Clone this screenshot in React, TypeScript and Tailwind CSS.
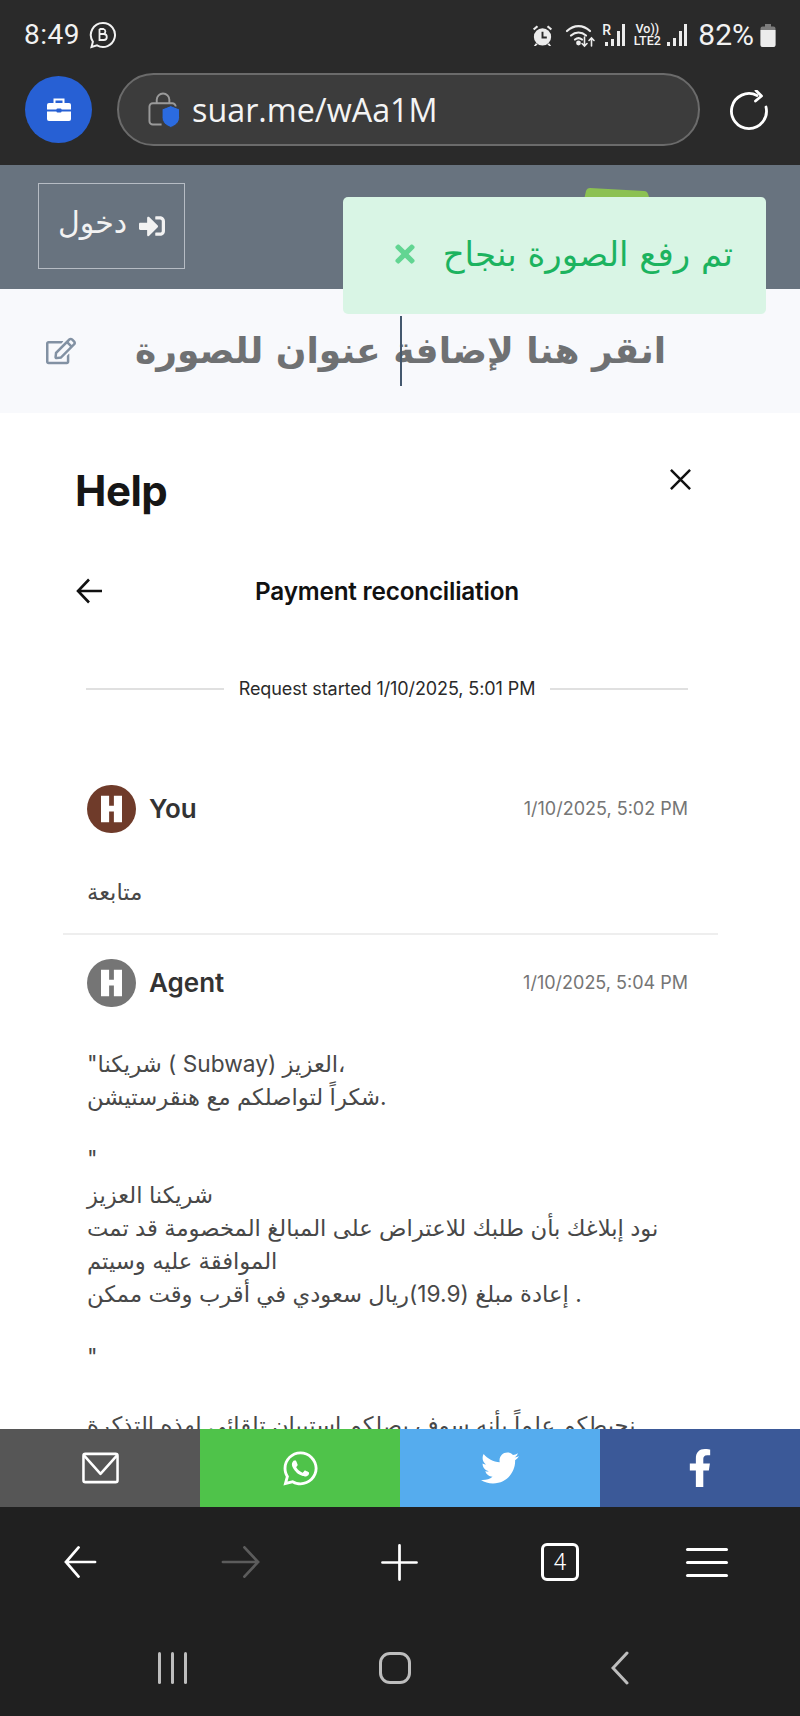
import { FaWhatsapp, FaTwitter, FaFacebookF, FaSignInAlt, FaRegEdit, FaTimes } from "react-icons/fa";

function Bars({ heights }: { heights: number[] }) {
  return (
    <div className="flex items-end gap-[2.67px] h-[22px]">
      {heights.map((h, i) => (
        <div key={i} className="w-[3px] bg-[#ececec]" style={{ height: h }} />
      ))}
    </div>
  );
}

function StatusBar() {
  return (
    <div className="h-[73px] flex items-center justify-between pl-[24px] pr-[24px] pb-[3px] text-[#f2f2f2]">
      <div className="flex items-center gap-[8px]">
        <span className="text-[28px] font-['Roboto',sans-serif] leading-none tracking-[0.5px]">8:49</span>
        <svg viewBox="0 0 28 28" className="w-[28px] h-[28px] ml-[1px]" fill="none" stroke="#f2f2f2" strokeWidth="2">
          <path d="M14 2a12 12 0 1 1-6 22.4L2.500 26l1.400-5.300A12 12 0 0 1 14 2z" />
          <path d="M10.500 8v11h4.300a3 3 0 0 0 0-6h-4.300m4 0a2.600 2.600 0 0 0 0-5h-4" strokeWidth="1.800" />
        </svg>
      </div>
      <div className="flex items-center">
        <svg viewBox="0 0 24 24" className="w-[23px] h-[23px]" fill="#ececec">
          <circle cx="12" cy="13.500" r="9" />
          <path d="M2 5l4-3.500 1.500 1.500-4 3.500zM22 5l-4-3.500-1.500 1.500 4 3.500zM5 20l-2 3h2l2-2zM19 20l2 3h-2l-2-2z" />
          <path d="M12 8v6h4.500" stroke="#2a2a2a" strokeWidth="2" fill="none" />
        </svg>
        <svg viewBox="0 0 30 26" className="w-[33px] h-[26px] ml-[10px]" fill="none" stroke="#ececec" strokeWidth="2.200" strokeLinecap="round">
          <path d="M1.500 9c7-6.500 16-6.500 23 0" />
          <path d="M5.500 13.500c4.500-4 10.500-4 15 0" />
          <path d="M9.500 17.500c2.500-2 4.500-2 7 0" />
          <circle cx="13" cy="21" r="1.300" fill="#ececec" />
          <path d="M19 15v9m-2.500-2.500 2.500 2.500 2.500-2.500M26 24v-8m-2.500 2.500L26 16l2.500 2.500" strokeWidth="1.600" />
        </svg>
        <div className="relative ml-[5px] w-[23px] h-[22px]">
          <span className="absolute left-0 top-[-1px] text-[14px] font-medium font-['Roboto',sans-serif] leading-none">R</span>
          <div className="absolute right-0 bottom-0">
            <Bars heights={[4, 7, 15, 22]} />
          </div>
        </div>
        <div className="ml-[8px] w-[28px] text-[12.500px] leading-[12px] font-medium font-['Roboto',sans-serif] text-center">
          <div>Vo))</div>
          <div>LTE2</div>
        </div>
        <div className="ml-[6px]">
          <Bars heights={[4, 8, 15, 22]} />
        </div>
        <span className="ml-[11px] text-[30px] font-['Roboto',sans-serif] leading-none">82%</span>
        <svg viewBox="0 0 16 23" className="w-[16px] h-[23px] ml-[6px]">
          <path d="M5 0h6v2.500h2.500a2 2 0 0 1 2 2V21a2 2 0 0 1-2 2h-11a2 2 0 0 1-2-2V4.500a2 2 0 0 1 2-2H5z" fill="#7c7c7c" />
          <path d="M.5 6h15v15a2 2 0 0 1-2 2h-11a2 2 0 0 1-2-2z" fill="#ececec" />
        </svg>
      </div>
    </div>
  );
}

function UrlRow() {
  return (
    <div className="h-[73px] flex items-center pl-[25px]">
      <div className="w-[67px] h-[67px] rounded-full bg-[#2760d4] flex items-center justify-center">
        <svg viewBox="0 0 26 26" className="w-[26px] h-[26px]" fill="none">
          <path d="M8.500 6V2.500h9V6" stroke="#fff" strokeWidth="2" />
          <path d="M1 8a2 2 0 0 1 2-2h20a2 2 0 0 1 2 2v4.500H1z" fill="#fff" />
          <path d="M1 14.500h24V22a2 2 0 0 1-2 2H3a2 2 0 0 1-2-2z" fill="#fff" />
          <rect x="10.500" y="11.500" width="5" height="4" rx="1" fill="#2760d4" />
        </svg>
      </div>
      <div className="ml-[25px] w-[583px] h-[73px] rounded-full bg-[#3c3c3c] border-2 border-[#6b6b6b] flex items-center pl-[29px]">
        <svg viewBox="0 0 34 36" className="w-[33px] h-[36px]" fill="none">
          <path d="M9 11V7.500a6.500 6.500 0 0 1 13 0V11" stroke="#9a9a9a" strokeWidth="2" />
          <path d="M14 33H5a3.500 3.500 0 0 1-3.500-3.500v-15A3.500 3.500 0 0 1 5 11h20a3.500 3.500 0 0 1 3.500 3.500" stroke="#9a9a9a" strokeWidth="2" />
          <path d="M23.500 13.500l9 3.500v8.500c0 5.500-4 8.500-9 10.500-5-2-9-5-9-10.500V17z" fill="#2b6be0" stroke="#3c3c3c" strokeWidth="1" />
        </svg>
        <span className="ml-[11px] text-[32.300px] leading-none text-[#f4f4f4] font-['Open_Sans',sans-serif]">suar.me/wAa1M</span>
      </div>
      <svg viewBox="0 0 40 40" className="ml-[29px] w-[40px] h-[40px]" fill="none" stroke="#fff" strokeWidth="2.800" strokeLinecap="round" strokeLinejoin="round">
        <path d="M28 5.500A17.500 17.500 0 1 0 37 17" />
        <path d="M27 0.500l5.500 5.500-6 5" />
      </svg>
    </div>
  );
}

function Toast() {
  return (
    <div className="absolute left-[343px] top-[197px] w-[423px] h-[117px] rounded-[5px] bg-[#d9f5e5] flex items-center justify-end gap-[24px] pr-[33px] pb-[3px] text-[#1cb35f] font-['DejaVu_Sans',sans-serif]">
      <FaTimes className="text-[28px] text-[#62d592]" />
      <span dir="rtl" className="text-[34px] leading-none">تم رفع الصورة بنجاح</span>
    </div>
  );
}

function Message({ avatar, name, time }: { avatar: string; name: string; time: string }) {
  return (
    <div className="flex items-center pl-[87px] pr-[112px] h-[49px]">
      <div className={`w-[49px] h-[48px] rounded-full flex items-center justify-center ${avatar}`}>
        <svg viewBox="0 0 22 28" className="w-[21px] h-[28px]" fill="#fff">
          <path d="M0 0h8.500v10.500h5V0H22v28h-8.500V16.500h-5V28H0z" />
        </svg>
      </div>
      <span className="ml-[13px] text-[26px] font-semibold text-[#333]">{name}</span>
      <span className="ml-auto text-[18px] text-[#757575]">{time}</span>
    </div>
  );
}

function Body({ children }: { children: React.ReactNode }) {
  return <p className="text-[22.700px] leading-[33px] text-[#484848] font-['Inter','DejaVu_Sans',sans-serif]">{children}</p>;
}

function HelpPanel() {
  return (
    <div className="flex-1 min-h-0 overflow-hidden bg-white font-['Inter',sans-serif]">
      <div className="flex justify-between pl-[75px] pr-[108px] pt-[52px]">
        <h1 className="text-[42px] leading-[52px] font-bold text-[#161616] tracking-[-0.5px]">Help</h1>
        <svg viewBox="0 0 24 24" className="w-[23px] h-[23px] mt-[3px]" fill="none" stroke="#111" strokeWidth="2.600">
          <path d="M2 2l20 20M22 2L2 22" />
        </svg>
      </div>
      <div className="relative flex items-center justify-center pr-[26px] mt-[59px] h-[30px]">
        <svg viewBox="0 0 26 26" className="absolute left-[76px] top-[2px] w-[26px] h-[26px]" fill="none" stroke="#111" strokeWidth="2.600">
          <path d="M26 13H2M13 1.500L2 13l11 11.500" />
        </svg>
        <span className="text-[24.300px] font-semibold text-[#111] tracking-[-0.2px]">Payment reconciliation</span>
      </div>
      <div className="flex items-center pl-[86px] pr-[112px] mt-[71px] gap-[15px]">
        <div className="flex-1 h-[2px] bg-[#e0e0e0]" />
        <span className="text-[18px] leading-[24px] text-[#2a2a2a] tracking-[-0.1px]">Request started 1/10/2025, 5:01 PM</span>
        <div className="flex-1 h-[2px] bg-[#e0e0e0]" />
      </div>
      <div className="mt-[83px]">
        <Message avatar="bg-[#6f3b2a]" name="You" time="1/10/2025, 5:02 PM" />
      </div>
      <div className="pl-[87px] mt-[42px] h-[33px]">
        <Body>متابعة</Body>
      </div>
      <div className="ml-[63px] mr-[82px] mt-[25px] h-[2px] bg-[#eeeeee]" />
      <div className="mt-[23px]">
        <Message avatar="bg-[#757575]" name="Agent" time="1/10/2025, 5:04 PM" />
      </div>
      <div className="pl-[87px] pr-[112px] mt-[40px]">
        <Body>"شريكنا ( Subway) العزيز،</Body>
        <Body>شكراً لتواصلكم مع هنقرستيشن.</Body>
        <div className="h-[29px]" />
        <Body>"</Body>
        <div className="h-[3px]" />
        <Body>شريكنا العزيز</Body>
        <Body>نود إبلاغك بأن طلبك للاعتراض على المبالغ المخصومة قد تمت الموافقة عليه وسيتم</Body>
        <Body>إعادة مبلغ (19.9)ريال سعودي في أقرب وقت ممكن .</Body>
        <div className="h-[30px]" />
        <Body>"</Body>
        <div className="h-[35px]" />
        <Body>نحيطكم علماً بأنه سوف يصلكم استبيان تلقائي لهذه التذكرة</Body>
      </div>
    </div>
  );
}

function ShareBar() {
  return (
    <div className="grid grid-cols-4 h-[78px] shrink-0 text-white">
      <div className="bg-[#565656] flex items-center justify-center">
        <svg viewBox="0 0 38 32" className="w-[37px] h-[32px]" fill="none" stroke="#fff" strokeWidth="2.600" strokeLinejoin="round">
          <rect x="1.500" y="1.500" width="35" height="29" rx="2" />
          <path d="M2 3l17 19L36 3" />
        </svg>
      </div>
      <div className="bg-[#4fc34a] flex items-center justify-center"><FaWhatsapp className="text-[39px]" /></div>
      <div className="bg-[#55acee] flex items-center justify-center"><FaTwitter className="text-[38px]" /></div>
      <div className="bg-[#3b5998] flex items-center justify-center"><FaFacebookF className="text-[38px]" /></div>
    </div>
  );
}

function BrowserNav() {
  return (
    <div className="h-[110px] shrink-0 flex items-center pl-[64px]">
      <svg viewBox="0 0 34 32" className="w-[33px] h-[32px]" fill="none" stroke="#fff" strokeWidth="2.800" strokeLinecap="round">
        <path d="M32 16H2M15 1L2 16l13 15" />
      </svg>
      <svg viewBox="0 0 40 32" className="ml-[124px] w-[39px] h-[32px]" fill="none" stroke="#5c5c5c" strokeWidth="2.800" strokeLinecap="round">
        <path d="M2 16h36M24 1l14 15-14 15" />
      </svg>
      <svg viewBox="0 0 38 38" className="ml-[121px] w-[37px] h-[37px]" fill="none" stroke="#fff" strokeWidth="2.800" strokeLinecap="round">
        <path d="M19 1.500v35M1.500 19h35" />
      </svg>
      <div className="ml-[123px] w-[38px] h-[38px] rounded-[6px] border-[3px] border-white flex items-center justify-center text-white text-[23px] font-['Roboto',sans-serif] font-light leading-none">4</div>
      <div className="ml-[107px] w-[42px] flex flex-col gap-[10px]">
        <div className="h-[3px] rounded-full bg-white" />
        <div className="h-[3px] rounded-full bg-white" />
        <div className="h-[3px] rounded-full bg-white" />
      </div>
    </div>
  );
}

function SystemNav() {
  return (
    <div className="h-[99px] shrink-0">
      <div className="flex items-center h-[34px] mt-[34px] pl-[158px]">
        <div className="flex gap-[10px]">
          <div className="w-[3px] h-[32px] bg-[#bdbdbd] rounded-full" />
          <div className="w-[3px] h-[32px] bg-[#bdbdbd] rounded-full" />
          <div className="w-[3px] h-[32px] bg-[#bdbdbd] rounded-full" />
        </div>
        <div className="ml-[192px] w-[32px] h-[32px] rounded-[11px] border-[3px] border-[#bdbdbd]" />
        <svg viewBox="0 0 18 34" className="ml-[200px] w-[18px] h-[34px]" fill="none" stroke="#bdbdbd" strokeWidth="3" strokeLinecap="round">
          <path d="M16 2L2 17l14 15" />
        </svg>
      </div>
    </div>
  );
}

export default function App() {
  return (
    <div className="relative w-[800px] h-[1716px] overflow-hidden flex flex-col bg-[#202020]">
      <div className="h-[165px] shrink-0 bg-[#2a2a2a]">
        <StatusBar />
        <UrlRow />
      </div>
      <div className="h-[124px] shrink-0 bg-[#68737f] flex justify-between pl-[38px] pr-[150px] pt-[18px]">
        <div className="w-[147px] h-[86px] border border-[#b6bcc4] flex items-center justify-center gap-[12px] text-[#f2f2f2] font-['DejaVu_Sans',sans-serif]">
          <span dir="rtl" className="text-[30px] leading-none pb-[6px]">دخول</span>
          <FaSignInAlt className="text-[26px]" />
        </div>
        <svg viewBox="0 0 66 12" className="w-[66px] h-[12px] mt-[5px]">
          <path d="M6 0l54 3q3 0 4 3l2 6H0l2-9q1-3 4-3z" fill="#8cc152" />
        </svg>
      </div>
      <div className="h-[124px] shrink-0 bg-[#f8f9fc] flex items-center pl-[46px]">
        <FaRegEdit className="text-[30px] text-[#8291a3]" />
        <span dir="rtl" className="ml-[59px] text-[36px] leading-none font-bold text-[#6f7173] font-['DejaVu_Sans',sans-serif]">انقر هنا لإضافة عنوان للصورة</span>
      </div>
      <HelpPanel />
      <ShareBar />
      <BrowserNav />
      <SystemNav />
      <Toast />
      <div className="absolute left-[400px] top-[316px] w-[2px] h-[70px] bg-[#44586e]" />
    </div>
  );
}
